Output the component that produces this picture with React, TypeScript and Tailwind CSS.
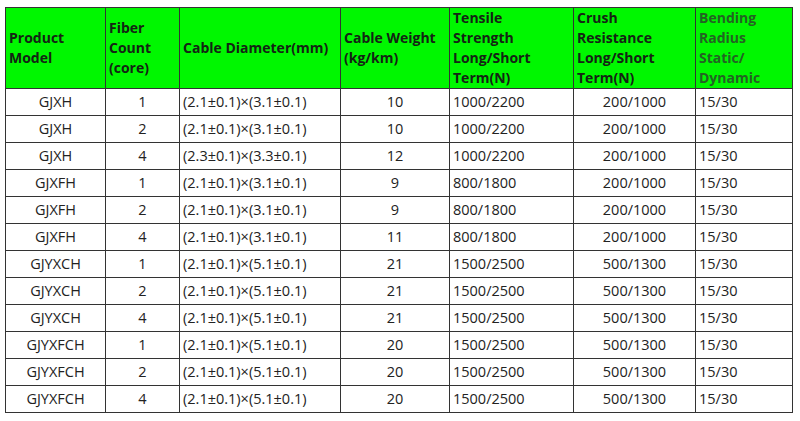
import React from "react";

type Row = {
  model: string;
  count: string;
  diameter: string;
  weight: string;
  tensile: string;
  crush: string;
  bending: string;
};

const rows: Row[] = [
  { model: "GJXH", count: "1", diameter: "(2.1±0.1)×(3.1±0.1)", weight: "10", tensile: "1000/2200", crush: "200/1000", bending: "15/30" },
  { model: "GJXH", count: "2", diameter: "(2.1±0.1)×(3.1±0.1)", weight: "10", tensile: "1000/2200", crush: "200/1000", bending: "15/30" },
  { model: "GJXH", count: "4", diameter: "(2.3±0.1)×(3.3±0.1)", weight: "12", tensile: "1000/2200", crush: "200/1000", bending: "15/30" },
  { model: "GJXFH", count: "1", diameter: "(2.1±0.1)×(3.1±0.1)", weight: "9", tensile: "800/1800", crush: "200/1000", bending: "15/30" },
  { model: "GJXFH", count: "2", diameter: "(2.1±0.1)×(3.1±0.1)", weight: "9", tensile: "800/1800", crush: "200/1000", bending: "15/30" },
  { model: "GJXFH", count: "4", diameter: "(2.1±0.1)×(3.1±0.1)", weight: "11", tensile: "800/1800", crush: "200/1000", bending: "15/30" },
  { model: "GJYXCH", count: "1", diameter: "(2.1±0.1)×(5.1±0.1)", weight: "21", tensile: "1500/2500", crush: "500/1300", bending: "15/30" },
  { model: "GJYXCH", count: "2", diameter: "(2.1±0.1)×(5.1±0.1)", weight: "21", tensile: "1500/2500", crush: "500/1300", bending: "15/30" },
  { model: "GJYXCH", count: "4", diameter: "(2.1±0.1)×(5.1±0.1)", weight: "21", tensile: "1500/2500", crush: "500/1300", bending: "15/30" },
  { model: "GJYXFCH", count: "1", diameter: "(2.1±0.1)×(5.1±0.1)", weight: "20", tensile: "1500/2500", crush: "500/1300", bending: "15/30" },
  { model: "GJYXFCH", count: "2", diameter: "(2.1±0.1)×(5.1±0.1)", weight: "20", tensile: "1500/2500", crush: "500/1300", bending: "15/30" },
  { model: "GJYXFCH", count: "4", diameter: "(2.1±0.1)×(5.1±0.1)", weight: "20", tensile: "1500/2500", crush: "500/1300", bending: "15/30" },
];

const th = "border border-[#333] bg-[#00f700] text-left align-middle font-bold px-[3px] py-0 leading-[20px] text-[14px] text-[#142414]";
const td = "border border-[#333] h-[27px] px-[3px] py-0 align-middle";

export default function App() {
  return (
    <div className="w-[800px] h-[421px] bg-white pt-[7px] pl-[5px] font-['Open_Sans',sans-serif] text-[14.5px] text-[#222]">
      <table className="table-fixed border-collapse w-[787px]">
        <colgroup>
          <col className="w-[100px]" />
          <col className="w-[74px]" />
          <col className="w-[161px]" />
          <col className="w-[109px]" />
          <col className="w-[124px]" />
          <col className="w-[122px]" />
          <col className="w-[97px]" />
        </colgroup>
        <thead>
          <tr className="h-[81px]">
            <th className={th}>Product<br />Model</th>
            <th className={th}>Fiber<br />Count<br />(core)</th>
            <th className={th}>Cable Diameter(mm)</th>
            <th className={th}>Cable Weight<br />(kg/km)</th>
            <th className={th}>Tensile<br />Strength<br />Long/Short<br />Term(N)</th>
            <th className={th}>Crush<br />Resistance<br />Long/Short<br />Term(N)</th>
            <th className={`${th} !text-[#236323]`}>Bending<br />Radius<br />Static/<br />Dynamic</th>
          </tr>
        </thead>
        <tbody>
          {rows.map((r, i) => (
            <tr key={i}>
              <td className={`${td} text-center`}>{r.model}</td>
              <td className={`${td} text-center`}>{r.count}</td>
              <td className={td}>{r.diameter}</td>
              <td className={`${td} text-center`}>{r.weight}</td>
              <td className={td}>{r.tensile}</td>
              <td className={`${td} text-center`}>{r.crush}</td>
              <td className={td}>{r.bending}</td>
            </tr>
          ))}
        </tbody>
      </table>
    </div>
  );
}
